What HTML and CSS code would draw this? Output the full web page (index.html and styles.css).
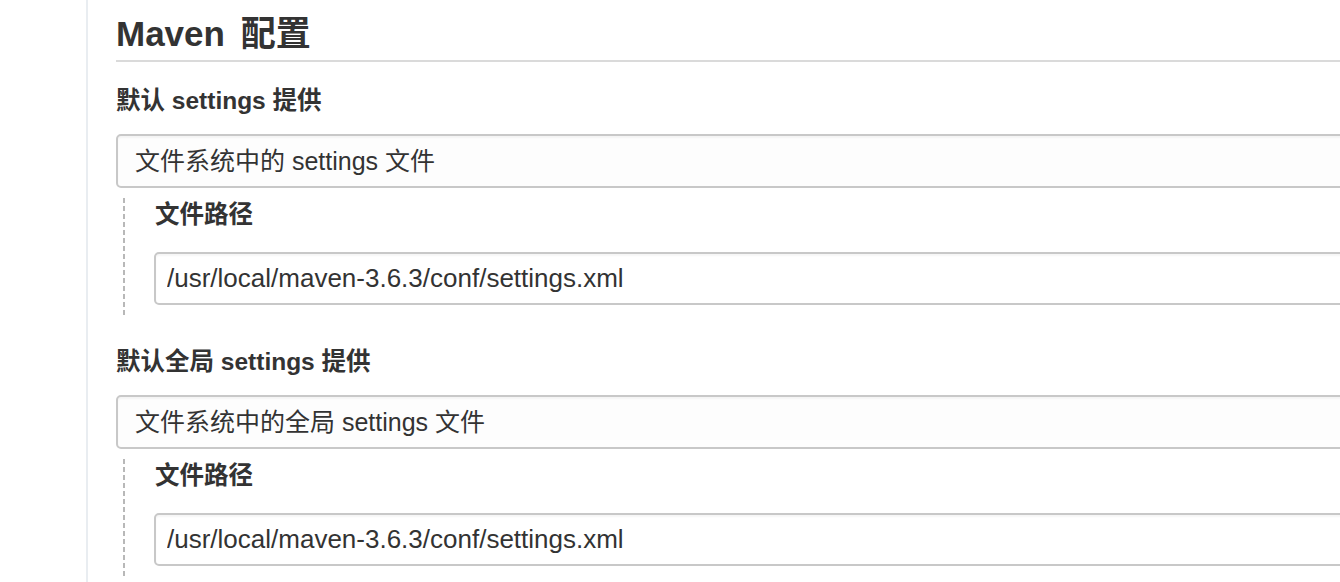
FILE: index.html
```html
<!DOCTYPE html>
<html lang="zh-CN">
<head>
    <meta charset="UTF-8">
    <title>Maven 配置</title>
    <link rel="stylesheet" href="styles.css">
</head>
<body>
    <div class="page">
        <div class="side"></div>
        <div class="main">
            <h1 class="section-title">Maven 配置</h1>

            <div class="field">
                <div class="field-label">默认 settings 提供</div>
                <div class="select-box">文件系统中的 settings 文件</div>
                <div class="nested">
                    <div class="field-label">文件路径</div>
                    <input class="text-box" type="text" value="/usr/local/maven-3.6.3/conf/settings.xml">
                </div>
            </div>

            <div class="field">
                <div class="field-label">默认全局 settings 提供</div>
                <div class="select-box">文件系统中的全局 settings 文件</div>
                <div class="nested">
                    <div class="field-label">文件路径</div>
                    <input class="text-box" type="text" value="/usr/local/maven-3.6.3/conf/settings.xml">
                </div>
            </div>
        </div>
    </div>
</body>
</html>
```

FILE: styles.css
```css
html, body { margin: 0; height: 100%; overflow: hidden; }
body {
    font-family: "Liberation Sans", "Noto Sans CJK SC", sans-serif;
    color: #333;
    background: #fff;
}
.page { display: flex; min-height: 100%; }
.side {
    width: 86px;
    flex: none;
    border-right: 2px solid #e9edf1;
}
.main {
    flex: 1;
    padding-left: 28px;
    margin-right: -40px;
}
.section-title {
    margin: 0;
    padding-top: 14px;
    font-size: 35px;
    line-height: 40px;
    font-weight: bold;
    word-spacing: 6px;
    padding-bottom: 6px;
    border-bottom: 2px solid #dadada;
}
.field { margin-top: 22px; }
.field + .field { margin-top: 30px; }
.field-label {
    font-size: 24.5px;
    line-height: 34px;
    font-weight: bold;
    margin-bottom: 16px;
}
.select-box {
    height: 50px;
    line-height: 50px;
    padding-left: 17px;
    font-size: 25px;
    border: 2px solid #c8c8c8;
    border-radius: 5px;
    background: #fdfdfd;
    box-shadow: inset 0 2px 2px rgba(0, 0, 0, 0.04);
}
.nested {
    margin-top: 10px;
    margin-left: 7px;
    padding: 0 0 10px 31px;
    background: repeating-linear-gradient(to bottom, #b8b8b8 0 5px, transparent 5px 8px) left top / 2px 100% no-repeat;
}
.nested .field-label { margin-bottom: 20px; padding-left: 1px; }
.text-box {
    display: block;
    box-sizing: border-box;
    width: 100%;
    height: 53px;
    margin: 0;
    padding: 0 11px;
    font-family: "Liberation Sans", "Noto Sans CJK SC", sans-serif;
    font-size: 26px;
    color: #333;
    border: 2px solid #c8c8c8;
    border-radius: 5px;
    background: #fff;
    box-shadow: inset 0 2px 2px rgba(0, 0, 0, 0.04);
    outline: none;
}
```
